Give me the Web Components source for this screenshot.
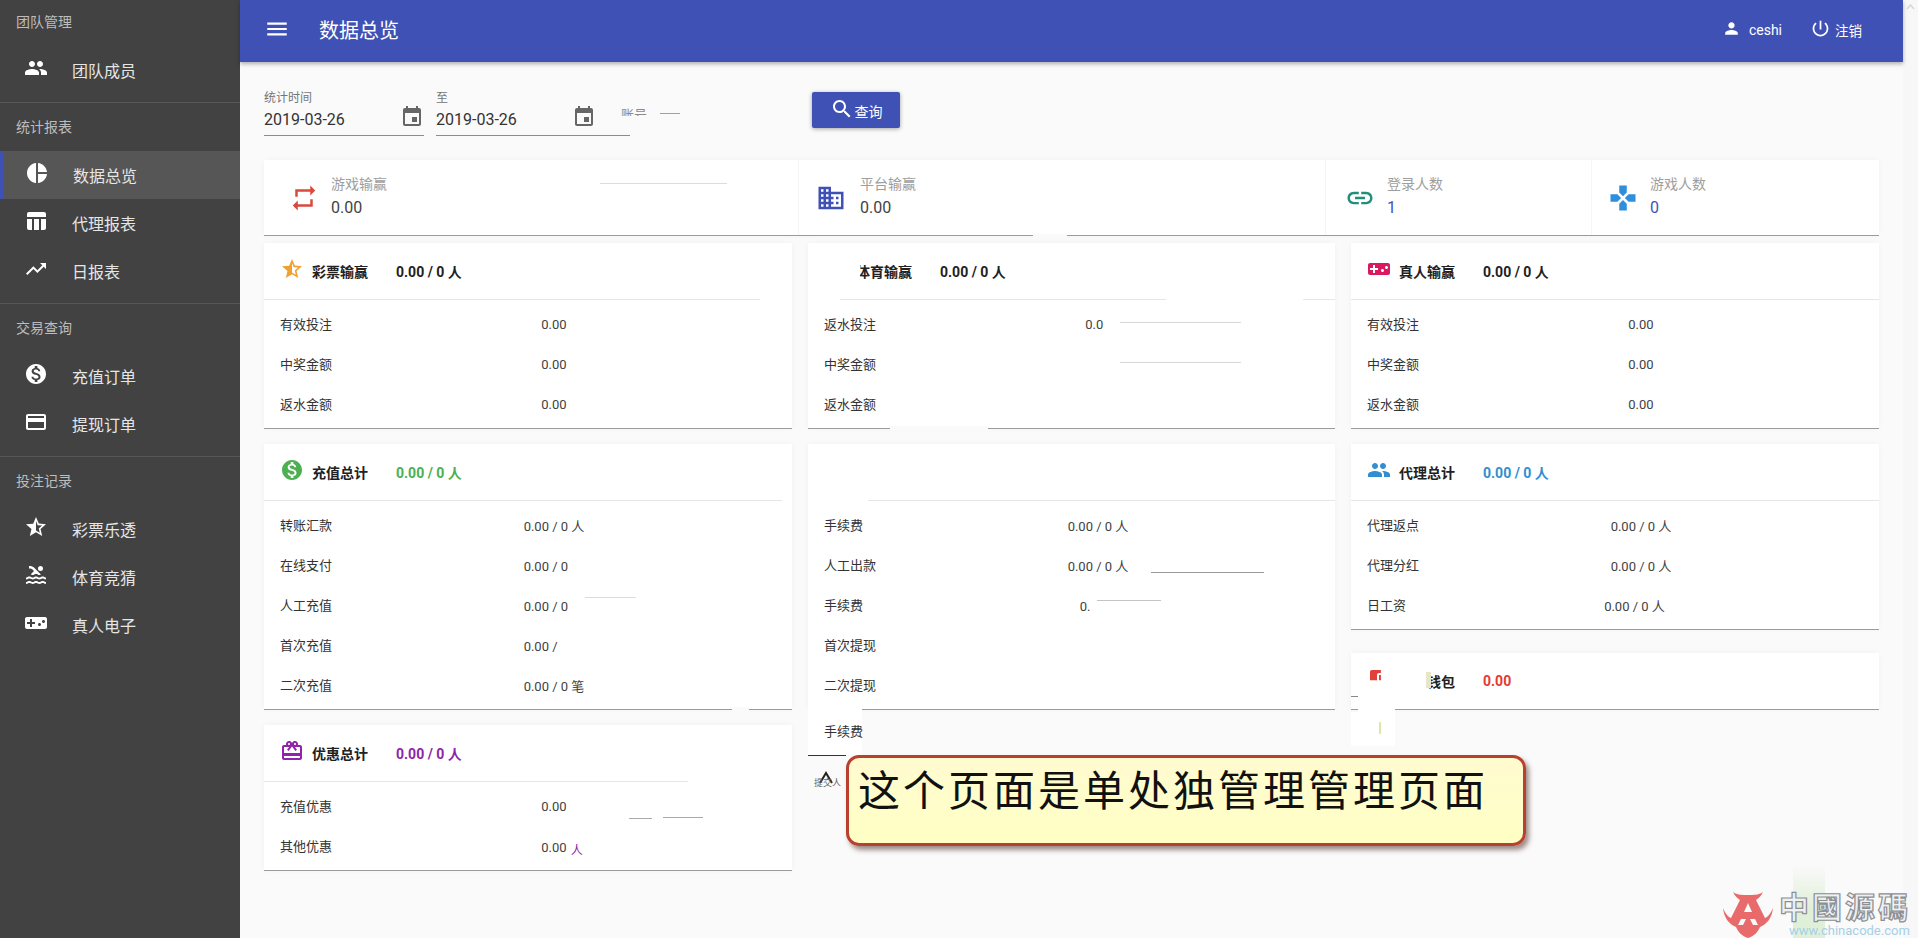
<!DOCTYPE html>
<html lang="zh-CN">
<head>
<meta charset="utf-8">
<title>数据总览</title>
<style>
  html, body { margin: 0; height: 100%; overflow: hidden; }
  body { position: relative; font-family: Roboto, "Noto Sans CJK SC", sans-serif; background: #fafafa; }
  .gone { visibility: hidden; }
</style>
</head>
<body>

<app-shell>
  <side-nav slot="nav">
    <nav-group label="团队管理" first>
      <nav-item icon="group">团队成员</nav-item>
    </nav-group>
    <nav-group label="统计报表">
      <nav-item icon="pie" active>数据总览</nav-item>
      <nav-item icon="table">代理报表</nav-item>
      <nav-item icon="trend">日报表</nav-item>
    </nav-group>
    <nav-group label="交易查询">
      <nav-item icon="money">充值订单</nav-item>
      <nav-item icon="card">提现订单</nav-item>
    </nav-group>
    <nav-group label="投注记录" last>
      <nav-item icon="starhalf">彩票乐透</nav-item>
      <nav-item icon="pool">体育竞猜</nav-item>
      <nav-item icon="game">真人电子</nav-item>
    </nav-group>
  </side-nav>

  <top-bar heading="数据总览" user="ceshi" slot="top"></top-bar>

  <filter-bar>
    <date-field label="统计时间" value="2019-03-26"></date-field>
    <date-field label="至" value="2019-03-26"></date-field>
    <account-field></account-field>
    <query-button>查询</query-button>
  </filter-bar>

  <stat-strip>
    <stat-item icon="repeat" color="#d9493c" label="游戏输赢" value="0.00" style="--pad:25px"></stat-item>
    <stat-item icon="domain" color="#3f51b5" label="平台输赢" value="0.00" style="--pad:18px;--gap:14px"></stat-item>
    <stat-item icon="link" color="#1f8f7c" label="登录人数" value="1" accent style="--pad:20px"></stat-item>
    <stat-item icon="pad" color="#2f8fdc" label="游戏人数" value="0" accent style="--pad:17px"></stat-item>
  </stat-strip>

  <report-grid>
    <report-column>
      <report-card icon="starhalf" tone="#f0a030" heading="彩票输赢" amount="0.00 / 0 人" amount-color="#212121">
        <report-row label="有效投注">0.00</report-row>
        <report-row label="中奖金额">0.00</report-row>
        <report-row label="返水金额">0.00</report-row>
      </report-card>
      <report-card icon="money" tone="#4caf50" heading="充值总计" amount="0.00 / 0 人" amount-color="#4caf50">
        <report-row label="转账汇款">0.00 / 0 人</report-row>
        <report-row label="在线支付">0.00 / 0<span class="gone"> 人</span></report-row>
        <report-row label="人工充值">0.00 / 0<span class="gone"> 人</span></report-row>
        <report-row label="首次充值">0.00 /<span class="gone"> 0 人</span></report-row>
        <report-row label="二次充值">0.00 / 0 笔</report-row>
      </report-card>
      <report-card icon="gift" tone="#8e24aa" heading="优惠总计" amount="0.00 / 0 人" amount-color="#8e24aa">
        <report-row label="充值优惠">0.00</report-row>
        <report-row label="其他优惠">0.00<span style="display:inline-block;width:0;margin:0 -4px 0 4px;color:#8e24aa;font-size:12px;transform:translateY(3px)">人</span></report-row>
      </report-card>
    </report-column>

    <report-column>
      <report-card heading="体育输赢" amount="0.00 / 0 人" amount-color="#212121" no-icon>
        <report-row label="返水投注">0.0<span class="gone">0</span></report-row>
        <report-row label="中奖金额"></report-row>
        <report-row label="返水金额"></report-row>
      </report-card>
      <report-card>
        <report-row label="手续费">0.00 / 0 人</report-row>
        <report-row label="人工出款">0.00 / 0 人</report-row>
        <report-row label="手续费"><span style="display:inline-block;margin-left:24px">0.<span class="gone">00 / 0 人</span></span></report-row>
        <report-row label="首次提现"></report-row>
        <report-row label="二次提现"></report-row>
      </report-card>
      <report-stub label="手续费"></report-stub>
    </report-column>

    <report-column>
      <report-card icon="game" tone="#d81b60" heading="真人输赢" amount="0.00 / 0 人" amount-color="#212121">
        <report-row label="有效投注">0.00</report-row>
        <report-row label="中奖金额">0.00</report-row>
        <report-row label="返水金额">0.00</report-row>
      </report-card>
      <report-card icon="group" tone="#2f8fd0" heading="代理总计" amount="0.00 / 0 人" amount-color="#2f8fd0">
        <report-row label="代理返点">0.00 / 0 人</report-row>
        <report-row label="代理分红">0.00 / 0 人</report-row>
        <report-row label="日工资"><span style="display:inline-block;margin-right:13px">0.00 / 0 人</span></report-row>
      </report-card>
      <report-card icon="wallet" tone="#e0413a" heading="钱包" amount="0.00" amount-color="#e53935" flat clip-icon indent style="margin-top:8px"></report-card>
    </report-column>
  </report-grid>
</app-shell>

<scan-marks></scan-marks>
<note-callout>这个页面是单处独管理管理页面</note-callout>
<site-watermark></site-watermark>

<script>
const ICONS = {
  menu: "M3 18h18v-2H3v2zm0-5h18v-2H3v2zm0-7v2h18V6H3z",
  group: "M16 11c1.66 0 2.99-1.34 2.99-3S17.66 5 16 5c-1.66 0-3 1.34-3 3s1.34 3 3 3zm-8 0c1.66 0 2.99-1.34 2.99-3S9.66 5 8 5C6.34 5 5 6.34 5 8s1.34 3 3 3zm0 2c-2.33 0-7 1.17-7 3.5V19h14v-2.5c0-2.33-4.67-3.5-7-3.5zm8 0c-.29 0-.62.02-.97.05 1.16.84 1.97 1.97 1.97 3.45V19h6v-2.5c0-2.33-4.67-3.5-7-3.5z",
  pie: "M11 2v20c-5.07-.5-9-4.79-9-10s3.93-9.5 9-10zm2.03 0v8.99H22c-.47-4.74-4.24-8.52-8.97-8.99zm0 11.01V22c4.74-.47 8.5-4.25 8.97-8.99h-8.97z",
  table: "M10 10.02h5V21h-5zM17 21h3c1.1 0 2-.9 2-2v-9h-5v11zm3-18H5c-1.1 0-2 .9-2 2v3h19V5c0-1.1-.9-2-2-2zM3 19c0 1.1.9 2 2 2h3V10H3v9z",
  trend: "M16 6l2.29 2.29-4.88 4.88-4-4L2 16.59 3.41 18l6-6 4 4 6.3-6.29L22 12V6z",
  money: "M12 2C6.48 2 2 6.48 2 12s4.48 10 10 10 10-4.48 10-10S17.52 2 12 2zm1.41 16.09V20h-2.67v-1.93c-1.71-.36-3.16-1.46-3.27-3.4h1.96c.1 1.05.82 1.87 2.65 1.87 1.96 0 2.4-.98 2.4-1.59 0-.83-.44-1.61-2.67-2.14-2.48-.6-4.18-1.62-4.18-3.67 0-1.72 1.39-2.84 3.11-3.21V4h2.67v1.95c1.86.45 2.79 1.86 2.85 3.39H14.3c-.05-1.11-.64-1.87-2.22-1.87-1.5 0-2.4.68-2.4 1.64 0 .84.65 1.39 2.67 1.91s4.18 1.39 4.18 3.91c-.01 1.83-1.38 2.83-3.12 3.16z",
  card: "M20 4H4c-1.11 0-1.99.89-1.99 2L2 18c0 1.11.89 2 2 2h16c1.11 0 2-.89 2-2V6c0-1.11-.89-2-2-2zm0 14H4v-6h16v6zm0-10H4V6h16v2z",
  starhalf: "M22 9.24l-7.19-.62L12 2 9.19 8.63 2 9.24l5.46 4.73L5.82 21 12 17.27 18.18 21l-1.63-7.03L22 9.24zM12 15.4V6.1l1.71 4.04 4.38.38-3.32 2.88 1 4.28L12 15.4z",
  pool: "M22 21c-1.11 0-1.73-.37-2.18-.64-.37-.22-.6-.36-1.15-.36-.56 0-.78.13-1.15.36-.46.27-1.07.64-2.18.64s-1.73-.37-2.18-.64c-.37-.22-.6-.36-1.15-.36-.56 0-.78.13-1.15.36-.46.27-1.08.64-2.19.64-1.11 0-1.73-.37-2.18-.64-.37-.23-.6-.36-1.15-.36s-.78.13-1.15.36c-.46.27-1.08.64-2.19.64v-2c.56 0 .78-.13 1.15-.36.46-.27 1.08-.64 2.19-.64s1.73.37 2.18.64c.37.23.59.36 1.15.36.56 0 .78-.13 1.15-.36.46-.27 1.08-.64 2.19-.64 1.11 0 1.73.37 2.18.64.37.22.6.36 1.15.36s.78-.13 1.15-.36c.45-.27 1.07-.64 2.18-.64s1.73.37 2.18.64c.37.23.59.36 1.15.36v2zm0-4.5c-1.11 0-1.73-.37-2.18-.64-.37-.22-.6-.36-1.15-.36-.56 0-.78.13-1.15.36-.45.27-1.07.64-2.18.64s-1.73-.37-2.18-.64c-.37-.22-.6-.36-1.15-.36-.56 0-.78.13-1.15.36-.45.27-1.07.64-2.18.64s-1.73-.37-2.18-.64c-.37-.22-.6-.36-1.15-.36s-.78.13-1.15.36c-.47.27-1.09.64-2.2.64v-2c.56 0 .78-.13 1.15-.36.45-.27 1.07-.64 2.18-.64s1.73.37 2.18.64c.37.22.6.36 1.15.36.56 0 .78-.13 1.15-.36.45-.27 1.07-.64 2.18-.64s1.73.37 2.18.64c.37.22.6.36 1.15.36s.78-.13 1.15-.36c.45-.27 1.07-.64 2.18-.64s1.73.37 2.18.64c.37.22.6.36 1.15.36v2zM8.67 12c.56 0 .78-.13 1.15-.36.46-.27 1.08-.64 2.19-.64 1.11 0 1.73.37 2.18.64.37.22.6.36 1.15.36s.78-.13 1.15-.36c.12-.07.26-.15.41-.23L10.48 5C8.93 3.45 7.5 2.99 5 3v2.5c1.82-.01 2.89.39 4 1.5l1 1-3.25 3.25c.31.12.56.27.77.39.37.23.59.36 1.15.36zM16.5 3a2.5 2.5 0 1 0 0 5 2.5 2.5 0 0 0 0-5z",
  game: "M21 6H3c-1.1 0-2 .9-2 2v8c0 1.1.9 2 2 2h18c1.1 0 2-.9 2-2V8c0-1.1-.9-2-2-2zm-10 7H8v3H6v-3H3v-2h3V8h2v3h3v2zm4.5 2c-.83 0-1.5-.67-1.5-1.5s.67-1.5 1.5-1.5 1.5.67 1.5 1.5-.67 1.5-1.5 1.5zm4-3c-.83 0-1.5-.67-1.5-1.5S18.67 9 19.5 9s1.5.67 1.5 1.5-.67 1.5-1.5 1.5z",
  event: "M17 12h-5v5h5v-5zM16 1v2H8V1H6v2H5c-1.11 0-1.99.9-1.99 2L3 19c0 1.1.89 2 2 2h14c1.1 0 2-.9 2-2V5c0-1.1-.9-2-2-2h-1V1h-2zm3 18H5V8h14v11z",
  search: "M15.5 14h-.79l-.28-.27C15.41 12.59 16 11.11 16 9.5 16 5.91 13.09 3 9.5 3S3 5.91 3 9.5 5.91 16 9.5 16c1.61 0 3.09-.59 4.23-1.57l.27.28v.79l5 4.99L20.49 19l-4.99-5zm-6 0C7.01 14 5 11.99 5 9.5S7.01 5 9.5 5 14 7.01 14 9.5 11.99 14 9.5 14z",
  repeat: "M7 7h10v3l4-4-4-4v3H5v6h2V7zm10 10H7v-3l-4 4 4 4v-3h12v-6h-2v4z",
  domain: "M12 7V3H2v18h20V7H12zM6 19H4v-2h2v2zm0-4H4v-2h2v2zm0-4H4V9h2v2zm0-4H4V5h2v2zm4 12H8v-2h2v2zm0-4H8v-2h2v2zm0-4H8V9h2v2zm0-4H8V5h2v2zm10 12h-8v-2h2v-2h-2v-2h2v-2h-2V9h8v10zm-2-8h-2v2h2v-2zm0 4h-2v2h2v-2z",
  link: "M3.9 12c0-1.71 1.39-3.1 3.1-3.1h4V7H7c-2.76 0-5 2.24-5 5s2.24 5 5 5h4v-1.9H7c-1.71 0-3.1-1.39-3.1-3.1zM8 13h8v-2H8v2zm9-6h-4v1.9h4c1.71 0 3.1 1.39 3.1 3.1s-1.39 3.1-3.1 3.1h-4V17h4c2.76 0 5-2.24 5-5s-2.24-5-5-5z",
  pad: "M15 7.5V2H9v5.5l3 3 3-3zM7.5 9H2v6h5.5l3-3-3-3zM9 16.5V22h6v-5.5l-3-3-3 3zM16.5 9l-3 3 3 3H22V9h-5.5z",
  person: "M12 12c2.21 0 4-1.79 4-4s-1.79-4-4-4-4 1.79-4 4 1.79 4 4 4zm0 2c-2.67 0-8 1.34-8 4v2h16v-2c0-2.66-5.33-4-8-4z",
  power: "M13 3h-2v10h2V3zm4.83 2.17l-1.42 1.42C17.99 7.86 19 9.81 19 12c0 3.87-3.13 7-7 7s-7-3.13-7-7c0-2.19 1.01-4.14 2.58-5.42L6.17 5.17C4.23 6.82 3 9.26 3 12c0 4.97 4.03 9 9 9s9-4.03 9-9c0-2.74-1.23-5.18-3.17-6.83z",
  gift: "M20 6h-2.18c.11-.31.18-.65.18-1 0-1.66-1.34-3-3-3-1.05 0-1.96.54-2.5 1.35l-.5.67-.5-.68C10.96 2.54 10.05 2 9 2 7.34 2 6 3.34 6 5c0 .35.07.69.18 1H4c-1.11 0-1.99.89-1.99 2L2 19c0 1.11.89 2 2 2h16c1.11 0 2-.89 2-2V8c0-1.11-.89-2-2-2zm-5-2c.55 0 1 .45 1 1s-.45 1-1 1-1-.45-1-1 .45-1 1-1zM9 4c.55 0 1 .45 1 1s-.45 1-1 1-1-.45-1-1 .45-1 1-1zm11 15H4v-2h16v2zm0-5H4V8h5.08L7 10.83 8.62 12 11 8.76l1-1.36 1 1.36L15.38 12 17 10.83 14.92 8H20v6z",
  wallet: "M21 18v1c0 1.1-.9 2-2 2H5c-1.11 0-2-.9-2-2V5c0-1.1.89-2 2-2h14c1.1 0 2 .9 2 2v1h-9c-1.11 0-2 .9-2 2v8c0 1.1.89 2 2 2h9zm-9-2h10V8H12v8zm4-2.5c-.83 0-1.5-.67-1.5-1.5s.67-1.5 1.5-1.5 1.5.67 1.5 1.5-.67 1.5-1.5 1.5z"
};

class Base extends HTMLElement {
  constructor() {
    super();
    this.attachShadow({ mode: "open" });
  }
  connectedCallback() {
    this.shadowRoot.innerHTML = this.render();
  }
  attr(name, dflt = "") {
    return this.hasAttribute(name) ? this.getAttribute(name) : dflt;
  }
}

class MIcon extends Base {
  render() {
    return `<style>
      :host { display: inline-flex; flex: none; width: var(--size, 24px); height: var(--size, 24px); color: inherit; }
      svg { width: 100%; height: 100%; fill: currentColor; display: block; }
    </style>
    <svg viewBox="0 0 24 24"><path d="${ICONS[this.attr("name")] || ""}"/></svg>`;
  }
}

class AppShell extends Base {
  render() {
    return `<style>
      :host { display: grid; grid-template-columns: 240px 1fr 15px; height: 938px; background: #fafafa; color: #333; }
      .main { min-width: 0; position: relative; }
      .content { padding: 0 24px; display: flex; flex-direction: column; }
      .bar { background: #f7f7f8; display: flex; justify-content: center; padding-top: 4px; box-sizing: border-box; }
      .bar svg { width: 9px; height: 6px; fill: none; stroke: #d6d6d6; stroke-width: 1.4; }
    </style>
    <slot name="nav"></slot>
    <div class="main">
      <slot name="top"></slot>
      <div class="content"><slot></slot></div>
    </div>
    <div class="bar"><svg viewBox="0 0 9 6"><path d="M1 5l3.5-4L8 5"/></svg></div>`;
  }
}

class SideNav extends Base {
  render() {
    return `<style>
      :host { display: block; background: #424242; height: 938px; overflow: hidden; }
    </style><slot></slot>`;
  }
}

class NavGroup extends Base {
  render() {
    return `<style>
      :host { display: block; padding-bottom: 8px; border-bottom: 1px solid #575757; }
      :host([last]) { border-bottom: 0; }
      .label { height: 48px; line-height: 48px; padding-left: 16px; font-size: 14px; color: #bdbdbd; }
      :host([first]) .label { height: 46px; line-height: 44px; }
    </style>
    <div class="label">${this.attr("label")}</div>
    <slot></slot>`;
  }
}

class NavItem extends Base {
  render() {
    return `<style>
      :host { display: flex; align-items: center; height: 48px; padding-left: 24px; font-size: 16px; color: #e6e6e6; box-sizing: border-box; }
      :host([active]) { background: #565656; border-left: 3px solid #3f51b5; padding-left: 22px; }
      m-icon { margin: 0 24px 4px 0; color: #fff; }
    </style>
    <m-icon name="${this.attr("icon")}"></m-icon><span><slot></slot></span>`;
  }
}

class TopBar extends Base {
  render() {
    return `<style>
      :host { display: flex; align-items: center; height: 62px; background: #3f51b5; color: #fff; box-shadow: 0 2px 4px rgba(0,0,0,.3); position: relative; }
      .menu { margin: 0 29px 4px 24px; --size: 26px; }
      h1 { margin: 0 0 3px; font-size: 20px; font-weight: 400; flex: 1; }
      .who { display: flex; align-items: center; font-size: 14px; margin-bottom: 2px; }
      .who m-icon { --size: 19px; margin: 0 8px 4px 0; }
      .who .out { margin-left: 28px; --size: 21px; margin-right: 4px; }
      .who .last { margin-right: 41px; font-size: 13.5px; }
    </style>
    <m-icon class="menu" name="menu"></m-icon>
    <h1>${this.attr("heading")}</h1>
    <div class="who">
      <m-icon name="person"></m-icon><span>${this.attr("user")}</span>
      <m-icon class="out" name="power"></m-icon><span class="last">注销</span>
    </div>`;
  }
}

class FilterBar extends Base {
  render() {
    return `<style>
      :host { display: flex; gap: 12px; height: 70px; padding-top: 28px; box-sizing: content-box; }
    </style><slot></slot>`;
  }
}

class DateField extends Base {
  render() {
    return `<style>
      :host { display: block; width: 160px; height: 45px; border-bottom: 1px solid #8c8c8c; color: #333; }
      .l { font-size: 12px; line-height: 14px; color: #757575; padding-top: 1px; }
      .v { display: flex; align-items: center; justify-content: space-between; height: 29px; font-size: 16px; }
      m-icon { color: #666; margin-bottom: 5px; }
    </style>
    <div class="l">${this.attr("label")}</div>
    <div class="v"><span>${this.attr("value")}</span><m-icon name="event"></m-icon></div>`;
  }
}

class AccountField extends Base {
  render() {
    return `<style>
      :host { display: block; width: 179px; padding-left: 13px; padding-top: 17px; font-size: 13px; line-height: 16px; color: #8a8a8a; }
    </style><span>账号</span>`;
  }
}

class QueryButton extends Base {
  render() {
    return `<style>
      :host { display: flex; align-items: center; justify-content: center; gap: 1px; width: 88px; height: 36px; margin-top: 2px; background: #3f51b5; color: #fff; font-size: 14px; border-radius: 2px; box-shadow: 0 1px 4px rgba(0,0,0,.35); }
      m-icon { margin-bottom: 3px; }
      span { padding-top: 2px; }
    </style>
    <m-icon name="search"></m-icon><span><slot></slot></span>`;
  }
}

class StatStrip extends Base {
  render() {
    return `<style>
      :host { display: grid; grid-template-columns: 534px 527px 266px 1fr; height: 75px; background: #fff; box-shadow: 0 1px 0 #9b9b9b, 0 0 6px rgba(0,0,0,.04); }
    </style><slot></slot>`;
  }
}

class StatItem extends Base {
  render() {
    return `<style>
      :host { display: flex; align-items: center; gap: var(--gap, 12px); padding-left: var(--pad, 20px); }
      :host(:not(:first-child)) { box-shadow: inset 1px 0 0 #f5f5f5; }
      m-icon { --size: 30px; color: ${this.attr("color")}; }
      .l { font-size: 14px; line-height: 20px; color: #9e9e9e; margin-top: -2px; }
      .v { font-size: 16px; line-height: 24px; color: #424242; margin-top: 2px; }
      :host([accent]) .v { color: #3f51b5; }
    </style>
    <m-icon name="${this.attr("icon")}"></m-icon>
    <div><div class="l">${this.attr("label")}</div><div class="v">${this.attr("value")}</div></div>`;
  }
}

class ReportGrid extends Base {
  render() {
    return `<style>
      :host { display: grid; grid-template-columns: 528px 527px 528px; gap: 16px; margin-top: 8px; }
    </style><slot></slot>`;
  }
}

class ReportColumn extends Base {
  render() {
    return `<style>
      :host { display: flex; flex-direction: column; gap: 16px; }
    </style><slot></slot>`;
  }
}

class ReportCard extends Base {
  render() {
    const icon = this.hasAttribute("icon")
      ? `<m-icon class="ico" name="${this.attr("icon")}" style="color:${this.attr("tone")}"></m-icon>`
      : `<span class="ico"></span>`;
    const head = this.hasAttribute("heading")
      ? `${icon}<b class="t">${this.attr("heading")}</b><b class="a" style="color:${this.attr("amount-color")}">${this.attr("amount")}</b>`
      : "";
    return `<style>
      :host { display: block; background: #fff; box-shadow: 0 1px 0 #9b9b9b, 0 0 6px rgba(0,0,0,.04); }
      .head { display: flex; align-items: center; height: 56px; padding-left: 16px; font-size: 14px; border-bottom: 1px solid #e6e6e6; box-sizing: content-box; }
      :host([flat]) .head { border-bottom: 0; }
      .ico { width: 24px; height: 24px; margin: 0 8px 4px 0; flex: none; }
      :host([clip-icon]) .ico { clip-path: inset(0 42% 45% 0); }
      .t { width: 56px; color: #212121; font-weight: 700; margin-right: 28px; white-space: nowrap; }
      :host([indent]) .t { padding-left: 28px; box-sizing: border-box; }
      .a { font-weight: 700; }
      .body { padding: 4px 0; }
      :host([flat]) .body { display: none; }
    </style>
    <div class="head">${head}</div>
    <div class="body"><slot></slot></div>`;
  }
}

class ReportRow extends Base {
  render() {
    return `<style>
      :host { display: grid; grid-template-columns: 176px 196px 1fr; align-items: center; height: 40px; padding: 0 16px; font-size: 13px; color: #333; }
      .k { margin-bottom: 2px; }
      .v { text-align: center; color: #424242; white-space: nowrap; }
    </style>
    <span class="k">${this.attr("label")}</span><span class="v"><slot></slot></span>`;
  }
}

class ReportStub extends Base {
  render() {
    return `<style>
      :host { display: block; margin-top: -16px; width: 38px; height: 46px; background: #fff; padding-left: 16px; font-size: 13px; line-height: 46px; color: #333; position: relative; white-space: nowrap; }
      :host::after { content: ""; position: absolute; left: 0; top: 46px; width: 38px; height: 1px; background: #333; }
      .extra { position: absolute; left: 6px; top: 61px; width: 40px; line-height: 12px; }
      svg { display: block; width: 16px; height: 14px; margin: 0 0 -7px 4px; fill: none; stroke: #222; stroke-width: 2; }
      small { display: block; font-size: 9px; color: #666; }
    </style>
    ${this.attr("label")}
    <div class="extra"><svg viewBox="0 0 16 14"><path d="M2 13L8 3l6 10"/></svg><small>提交人</small></div>`;
  }
}

// leftovers of the retouched screenshot: stray hairlines and wiped-out patches
const MARKS = [
  [600, 183, 127, 1, "#dcdcdc"], [660, 113, 20, 1, "#a0a0a0"], [596, 135, 34, 1, "#8c8c8c"],
  [1120, 322, 121, 1, "#d8d8d8"], [1120, 362, 121, 1, "#d8d8d8"], [1151, 572, 113, 1, "#999"],
  [1097, 600, 64, 1, "#c4c4c4"], [585, 597, 51, 1, "#dcdcdc"], [629, 818, 23, 1, "#aaa"], [663, 817, 40, 1, "#aaa"],
  [1033, 234, 34, 4, "#fafafa"], [760, 299, 32, 2, "#fff"], [808, 299, 32, 2, "#fff"], [1166, 299, 137, 2, "#fff"],
  [890, 426, 98, 5, "#fafafa"], [732, 707, 17, 5, "#fafafa"], [782, 500, 10, 2, "#fff"], [688, 781, 104, 2, "#fff"],
  [808, 500, 60, 2, "#fff"], [808, 707, 33, 5, "#fff"], [1358, 704, 37, 8, "#fff"], [1351, 696, 7, 1, "#888"],
  [856, 262, 4, 18, "#fff"], [1351, 712, 44, 34, "#fff"], [1379, 722, 2, 12, "#dfe8a8"], [1426, 672, 5, 16, "#e8e6c8"],
  [618, 116, 36, 10, "#fafafa"]
];

class ScanMarks extends Base {
  render() {
    const bits = MARKS.map(([x, y, w, h, c]) =>
      `<i style="left:${x}px;top:${y}px;width:${w}px;height:${h}px;background:${c}"></i>`).join("");
    return `<style>
      :host { position: absolute; inset: 0; pointer-events: none; }
      i { position: absolute; display: block; }
    </style>${bits}`;
  }
}

class NoteCallout extends Base {
  render() {
    return `<style>
      :host { position: absolute; left: 846px; top: 755px; width: 680px; height: 91px; box-sizing: border-box; border: 3px solid #b9402f; border-radius: 13px; background: linear-gradient(#fffbd0, #ffffc4); box-shadow: 3px 4px 5px rgba(80,50,40,.55); color: #111; font: 400 42px/60px "Liberation Serif", "Noto Sans CJK SC", serif; letter-spacing: 3px; padding: 4px 0 0 9px; white-space: nowrap; overflow: hidden; }
    </style><slot></slot>`;
  }
}

class SiteWatermark extends Base {
  render() {
    return `<style>
      :host { position: absolute; left: 1723px; top: 865px; width: 195px; height: 73px; display: block; overflow: hidden; }
      .band { position: absolute; left: 70px; top: 0; width: 32px; height: 73px; background: linear-gradient(#fafafa, #e0efd8 60%); }
      svg { position: absolute; left: 0; top: 26px; width: 50px; height: 47px; }
      .cn { position: absolute; left: 56px; top: 24px; font: 700 30px/32px "Noto Sans CJK TC", sans-serif; color: #eef0f2; -webkit-text-stroke: 1.2px #8d8f92; white-space: nowrap; letter-spacing: 3px; }
      .en { position: absolute; left: 66px; top: 58px; font: 400 13px/15px Roboto, sans-serif; color: #a6cfe6; white-space: nowrap; }
    </style>
    <div class="band"></div>
    <svg viewBox="0 0 50 47"><path fill="#e86a6a" d="M10 1c4 3 9 3 15 3s11 0 15-3c-2 4-4 6-7 8l9 18c3-1 6-5 8-10-1 10-6 16-13 19-2 5-6 9-12 11-6-2-10-6-12-11C6 33 1 27 0 17c2 5 5 9 8 10l9-18c-3-2-5-4-7-8z"/><path fill="#fafafa" d="M25 12l4 9h-8zM18 28h5l-3 6h-5zM27 28h5l3 6h-5z"/></svg>
    <div class="cn">中國源碼</div>
    <div class="en">www.chinacode.com</div>`;
  }
}

customElements.define("m-icon", MIcon);
customElements.define("app-shell", AppShell);
customElements.define("side-nav", SideNav);
customElements.define("nav-group", NavGroup);
customElements.define("nav-item", NavItem);
customElements.define("top-bar", TopBar);
customElements.define("filter-bar", FilterBar);
customElements.define("date-field", DateField);
customElements.define("account-field", AccountField);
customElements.define("query-button", QueryButton);
customElements.define("stat-strip", StatStrip);
customElements.define("stat-item", StatItem);
customElements.define("report-grid", ReportGrid);
customElements.define("report-column", ReportColumn);
customElements.define("report-card", ReportCard);
customElements.define("report-row", ReportRow);
customElements.define("report-stub", ReportStub);
customElements.define("scan-marks", ScanMarks);
customElements.define("note-callout", NoteCallout);
customElements.define("site-watermark", SiteWatermark);
</script>
</body>
</html>
